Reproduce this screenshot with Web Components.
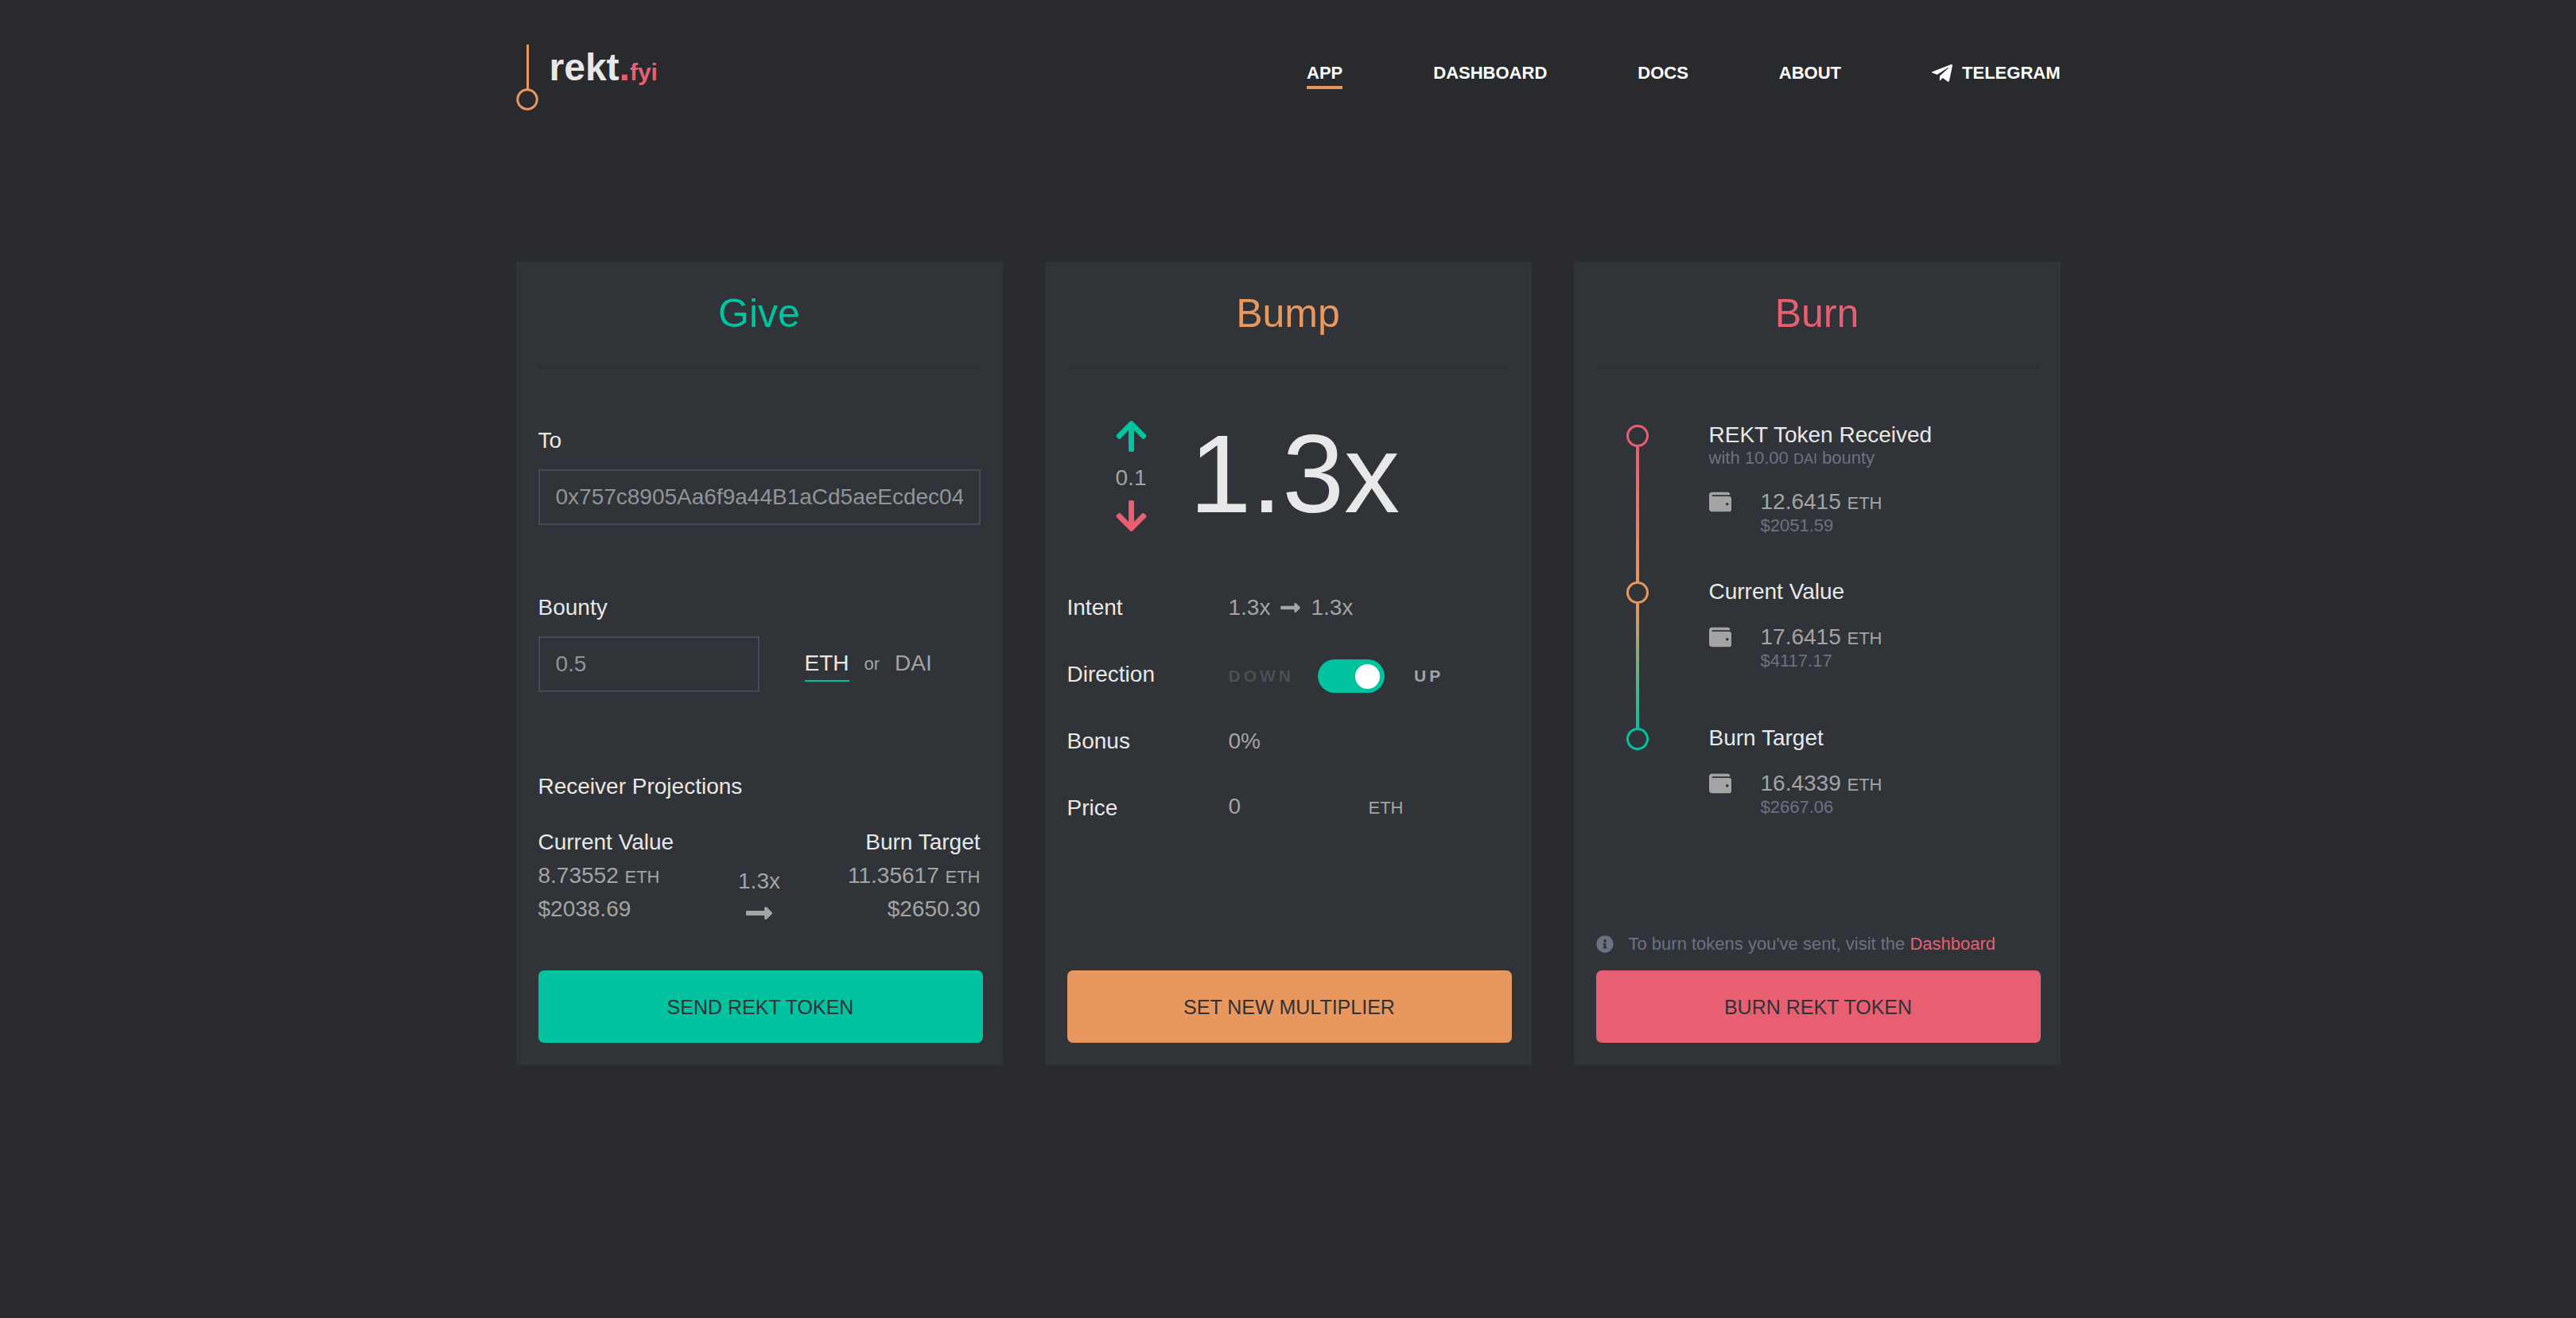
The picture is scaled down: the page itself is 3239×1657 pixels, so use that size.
<!DOCTYPE html>
<html lang="en">
<head>
<meta charset="utf-8">
<meta name="viewport" content="width=device-width, initial-scale=1">
<title>rekt.fyi</title>
<style>
  :root {
    --bg: #282a2e;
    --panel: #303338;
    --rule: #2d2f33;
    --field: #464a54;
    --text: #e8e8e8;
    --muted: #a4a4a4;
    --dim: #6b7284;
    --green: #02c39f;
    --orange: #e8985f;
    --pink: #e85f71;
  }
  html { background: var(--bg); }
  body {
    margin: 0;
    background: var(--bg);
    color: var(--text);
    font: 28px/42px "Liberation Sans", Arial, sans-serif;
  }
</style>
</head>
<body>
<rekt-app></rekt-app>

<script>
const define = (name, html, setup) => {
  const template = document.createElement('template');
  template.innerHTML = html;
  customElements.define(name, class extends HTMLElement {
    constructor() {
      super();
      this.attachShadow({ mode: 'open' }).append(template.content.cloneNode(true));
    }
    connectedCallback() { if (setup) setup(this, this.shadowRoot); }
  });
};

const ICONS = {
  arrow: ['0 0 448 512', 'M313.941 216H12c-6.627 0-12 5.373-12 12v56c0 6.627 5.373 12 12 12h301.941v46.059c0 21.382 25.851 32.09 40.971 16.971l86.059-86.059c9.373-9.373 9.373-24.569 0-33.941l-86.059-86.059c-15.119-15.119-40.971-4.411-40.971 16.971V216z'],
  up: ['0 0 448 512', 'M34.9 289.5l-22.2-22.2c-9.4-9.4-9.4-24.6 0-33.9L207 39c9.4-9.4 24.6-9.4 33.9 0l194.3 194.3c9.4 9.4 9.4 24.6 0 33.9L413 289.4c-9.5 9.5-25 9.3-34.3-.4L264 168.6V456c0 13.3-10.7 24-24 24h-32c-13.3 0-24-10.7-24-24V168.6L69.2 289.1c-9.3 9.8-24.8 10-34.3.4z'],
  down: ['0 0 448 512', 'M413.1 222.5l22.2 22.2c9.4 9.4 9.4 24.6 0 33.9L241 473c-9.4 9.4-24.6 9.4-33.9 0L12.7 278.6c-9.4-9.4-9.4-24.6 0-33.9l22.2-22.2c9.5-9.5 25-9.3 34.3.4L184 343.4V56c0-13.3 10.7-24 24-24h32c13.3 0 24 10.7 24 24v287.4l114.8-120.5c9.3-9.8 24.8-10 34.3-.4z'],
  wallet: ['0 0 512 512', 'M461.2 128H80c-8.84 0-16-7.16-16-16s7.16-16 16-16h384c8.84 0 16-7.16 16-16 0-26.51-21.49-48-48-48H64C28.65 32 0 60.65 0 96v320c0 35.35 28.65 64 64 64h397.2c28.02 0 50.8-21.53 50.8-48V176c0-26.47-22.78-48-50.8-48zM416 336c-17.67 0-32-14.33-32-32s14.33-32 32-32 32 14.33 32 32-14.33 32-32 32z'],
  telegram: ['0 0 448 512', 'M446.7 98.6l-67.6 318.8c-5.1 22.5-18.4 28.1-37.5 17.5l-103-75.9-49.7 47.8c-5.5 5.5-10.1 10.1-20.7 10.1l7.4-104.9 190.9-172.5c8.3-7.4-1.8-11.5-12.9-4.1L117.8 284 16.2 252.2c-22.1-6.9-22.5-22.1 4.6-32.7L418.2 66.4c18.4-6.9 34.5 4.1 28.5 32.2z'],
  info: ['0 0 512 512', 'M256 8C119.043 8 8 119.083 8 256c0 136.997 111.043 248 248 248s248-111.003 248-248C504 119.083 392.957 8 256 8zm0 110c23.196 0 42 18.804 42 42s-18.804 42-42 42-42-18.804-42-42 18.804-42 42-42zm56 254c0 6.627-5.373 12-12 12h-88c-6.627 0-12-5.373-12-12v-24c0-6.627 5.373-12 12-12h12v-64h-12c-6.627 0-12-5.373-12-12v-24c0-6.627 5.373-12 12-12h64c6.627 0 12 5.373 12 12v100h12c6.627 0 12 5.373 12 12v24z']
};

define('rekt-icon', `
  <style>
    :host { display: block; flex: none; }
    svg { display: block; width: 100%; height: 100%; fill: currentColor; }
  </style>
  <svg aria-hidden="true"><path/></svg>`,
  (host, root) => {
    const [box, d] = ICONS[host.getAttribute('name')];
    root.querySelector('svg').setAttribute('viewBox', box);
    root.querySelector('path').setAttribute('d', d);
  });

define('rekt-header', `
  <style>
    :host { display: flex; justify-content: space-between; align-items: flex-start; padding-top: 56px; }
    .logo { display: flex; gap: 14px; color: var(--text); text-decoration: none; font-size: 48px; line-height: 58px; font-weight: 700; }
    .logo svg { display: block; width: 28px; height: 84px; fill: none; stroke: var(--orange); stroke-width: 3; }
    .dot { color: var(--pink); }
    small { font-size: 30px; line-height: 30px; }
    nav { display: flex; gap: 114px; padding-top: 22px; font-size: 22px; line-height: 28px; font-weight: 700; }
    nav a { display: flex; gap: 12px; align-items: center; color: #fff; text-decoration: none; padding-bottom: 2px; border-bottom: 4px solid transparent; }
    nav a[aria-current] { border-color: var(--orange); }
    rekt-icon { width: 26px; height: 30px; margin: -1px 0; }
  </style>
  <a class="logo" href="#">
    <svg viewBox="0 0 28 84" aria-hidden="true"><path d="M14.5 0V57"/><circle cx="14" cy="69" r="12.2"/></svg>
    <span>rekt<span class="dot">.<small>fyi</small></span></span>
  </a>
  <nav>
    <a href="#" aria-current="page">APP</a>
    <a href="#">DASHBOARD</a>
    <a href="#">DOCS</a>
    <a href="#">ABOUT</a>
    <a href="#"><rekt-icon name="telegram"></rekt-icon>TELEGRAM</a>
  </nav>`);

define('rekt-card', `
  <style>
    :host { display: flex; flex-direction: column; flex: 1 1 0; min-width: 0; box-sizing: border-box; padding: 28px; background: var(--panel); }
    h2 { margin: 0; padding-bottom: 28px; border-bottom: 4px solid var(--rule); font-size: 50px; line-height: 75px; font-weight: 400; text-align: center; color: var(--accent); }
    .body { flex: 1; display: flex; flex-direction: column; }
    button { width: calc(100% + 3px); height: 91px; border: 0; border-radius: 7px; background: var(--accent); color: #303237; font: inherit; font-size: 25px; cursor: pointer; }
  </style>
  <h2><slot name="title"></slot></h2>
  <div class="body"><slot></slot></div>
  <button type="button"></button>`,
  (host, root) => { root.querySelector('button').textContent = host.getAttribute('action'); });

define('rekt-field', `
  <style>
    :host { display: flex; flex-direction: column; gap: 15px; }
    .row { display: flex; align-items: center; }
    input { flex: 1 1 0; width: 0; min-width: 0; box-sizing: border-box; height: 70px; padding: 0 20px; border: 2px solid var(--field); border-radius: 0; background: none; color: #919499; font: inherit; outline: 0; }
    ::slotted(*) { flex: none; width: 50%; box-sizing: border-box; padding-left: 57px; }
  </style>
  <label for="box"></label>
  <div class="row"><input id="box" type="text"><slot></slot></div>`,
  (host, root) => {
    root.querySelector('label').textContent = host.getAttribute('label');
    root.querySelector('input').value = host.getAttribute('value');
  });

define('rekt-amount', `
  <style>
    :host { display: block; color: var(--muted); }
    small { font-size: 22px; line-height: 22px; }
  </style>
  <slot></slot> <small>ETH</small>`);

define('rekt-currency', `
  <style>
    :host { display: flex; align-items: center; gap: 19px; font-size: 22px; color: var(--muted); }
    button { border: 0; border-bottom: 2px solid transparent; padding: 0; background: none; color: inherit; font: inherit; font-size: 28px; cursor: pointer; }
    button[aria-pressed="true"] { color: var(--text); border-color: var(--green); }
  </style>
  <button type="button" aria-pressed="true">ETH</button>
  <span>or</span>
  <button type="button" aria-pressed="false">DAI</button>`);

define('rekt-give', `
  <style>
    :host { display: flex; flex: 1; min-width: 0; --accent: var(--green); }
    .to { margin-top: 69px; }
    .bounty { margin-top: 83px; }
    h3, h4 { margin: 0; font: inherit; }
    h3 { margin: 98px 0 28px; }
    .projections { display: flex; justify-content: space-between; padding-bottom: 53px; color: var(--muted); }
    .projections > div { flex: 1 1 0; }
    .projections > .multiplier { flex: none; display: flex; flex-direction: column; align-items: center; padding-top: 49px; }
    .multiplier rekt-icon { width: 33px; height: 38px; }
    .right { text-align: right; }
    h4 { color: var(--text); }
  </style>
  <rekt-card action="SEND REKT TOKEN">
    <span slot="title">Give</span>
    <rekt-field class="to" label="To" value="0x757c8905Aa6f9a44B1aCd5aeEcdec04"></rekt-field>
    <rekt-field class="bounty" label="Bounty" value="0.5"><rekt-currency></rekt-currency></rekt-field>
    <h3>Receiver Projections</h3>
    <div class="projections">
      <div><h4>Current Value</h4><rekt-amount>8.73552</rekt-amount>$2038.69</div>
      <div class="multiplier">1.3x<rekt-icon name="arrow"></rekt-icon></div>
      <div class="right"><h4>Burn Target</h4><rekt-amount>11.35617</rekt-amount>$2650.30</div>
    </div>
  </rekt-card>`);

define('rekt-switch', `
  <style>
    :host { display: flex; align-items: center; color: var(--muted); font-size: 21px; font-weight: 700; letter-spacing: 4px; }
    .off { color: #4c4f54; }
    input { appearance: none; flex: none; width: 84px; height: 42px; margin: 0 37px 0 30px; padding: 6px; box-sizing: border-box; border-radius: 21px; background: var(--green); display: flex; justify-content: flex-end; cursor: pointer; }
    input::before { content: ""; width: 31px; height: 31px; border-radius: 50%; background: #fff; }
    input:not(:checked) { justify-content: flex-start; background: var(--pink); }
  </style>
  <span class="off">DOWN</span>
  <input type="checkbox" role="switch" aria-label="Direction up" checked>
  <span>UP</span>`);

define('rekt-bump', `
  <style>
    :host { display: flex; flex: 1; min-width: 0; --accent: var(--orange); }
    .stepper { display: flex; gap: 54px; padding: 62px 0 72px 61px; }
    .steps { display: flex; flex-direction: column; align-items: center; color: var(--muted); }
    .steps span { padding: 9px 0 4px; }
    button { display: block; border: 0; padding: 0; background: none; cursor: pointer; }
    button rekt-icon { width: 39px; height: 45px; }
    .up { color: var(--green); }
    .down { color: var(--pink); }
    .value { font-size: 140px; line-height: 140px; }
    dl { display: grid; grid-template-columns: 203px 1fr; grid-auto-rows: 42px; row-gap: 42px; margin: 0; }
    dd { margin: 0; color: var(--muted); }
    .intent { display: flex; align-items: center; gap: 13px; }
    .intent rekt-icon { width: 25px; height: 28px; }
    .direction { padding-top: 2px; }
    .price { display: flex; align-items: baseline; line-height: 38px; }
    .price output { width: 176px; }
    small { font-size: 22px; }
  </style>
  <rekt-card action="SET NEW MULTIPLIER">
    <span slot="title">Bump</span>
    <div class="stepper">
      <div class="steps">
        <button class="up" type="button" aria-label="Increase"><rekt-icon name="up"></rekt-icon></button>
        <span>0.1</span>
        <button class="down" type="button" aria-label="Decrease"><rekt-icon name="down"></rekt-icon></button>
      </div>
      <div class="value">1.3x</div>
    </div>
    <dl>
      <dt>Intent</dt><dd class="intent">1.3x<rekt-icon name="arrow"></rekt-icon>1.3x</dd>
      <dt>Direction</dt><dd class="direction"><rekt-switch></rekt-switch></dd>
      <dt>Bonus</dt><dd>0%</dd>
      <dt>Price</dt><dd class="price"><output>0</output><small>ETH</small></dd>
    </dl>
  </rekt-card>`);

define('rekt-step', `
  <style>
    :host { display: flex; gap: 76px; padding-left: 38px; }
    .rail { display: flex; flex-direction: column; align-items: center; }
    .ring { box-sizing: border-box; width: 28px; height: 28px; border: 3px solid var(--from); border-radius: 50%; }
    .line { flex: 1; width: 4px; background: linear-gradient(var(--from), var(--to)); }
    :host([last]) .line { display: none; }
    .title { line-height: 26px; }
    .content { padding-bottom: var(--space, 0); }
    .note { display: block; color: var(--dim); font-size: 22px; line-height: 32px; }
    .worth { display: flex; gap: 37px; padding-top: var(--lead, 30px); line-height: 28px; }
    .worth rekt-icon { width: 28px; height: 28px; color: var(--muted); }
  </style>
  <div class="rail"><div class="ring"></div><div class="line"></div></div>
  <div class="content">
    <div class="title"><slot name="title"></slot></div>
    <slot name="note"></slot>
    <div class="worth">
      <rekt-icon name="wallet"></rekt-icon>
      <div><rekt-amount><slot></slot></rekt-amount><span class="note"><slot name="usd"></slot></span></div>
    </div>
  </div>`);

define('rekt-burn', `
  <style>
    :host { display: flex; flex: 1; min-width: 0; --accent: var(--pink); }
    .timeline { padding-top: 70px; }
    .received { --from: var(--pink); --to: var(--orange); --lead: 25px; --space: 54px; }
    .current { --from: var(--orange); --to: var(--green); --space: 68px; }
    .target { --from: var(--green); }
    .bounty { display: block; color: var(--dim); font-size: 22px; line-height: 32px; }
    small { font-size: 18px; line-height: 18px; }
    p { display: flex; align-items: center; gap: 19px; margin: auto 0 19px; color: var(--dim); font-size: 22px; line-height: 28px; }
    p rekt-icon { width: 22px; height: 22px; }
    a { color: var(--pink); text-decoration: none; }
  </style>
  <rekt-card action="BURN REKT TOKEN">
    <span slot="title">Burn</span>
    <div class="timeline">
      <rekt-step class="received">
        <span slot="title">REKT Token Received</span>
        <span slot="note" class="bounty">with 10.00 <small>DAI</small> bounty</span>
        12.6415<span slot="usd">$2051.59</span>
      </rekt-step>
      <rekt-step class="current"><span slot="title">Current Value</span>17.6415<span slot="usd">$4117.17</span></rekt-step>
      <rekt-step class="target" last><span slot="title">Burn Target</span>16.4339<span slot="usd">$2667.06</span></rekt-step>
    </div>
    <p><rekt-icon name="info"></rekt-icon><span>To burn tokens you've sent, visit the <a href="#">Dashboard</a></span></p>
  </rekt-card>`);

define('rekt-app', `
  <style>
    :host { display: block; box-sizing: border-box; max-width: 1998px; margin: 0 auto; padding: 0 28px 56px; }
    main { display: flex; gap: 53px; margin-top: 189px; }
  </style>
  <rekt-header></rekt-header>
  <main>
    <rekt-give></rekt-give>
    <rekt-bump></rekt-bump>
    <rekt-burn></rekt-burn>
  </main>`);
</script>
</body>
</html>
